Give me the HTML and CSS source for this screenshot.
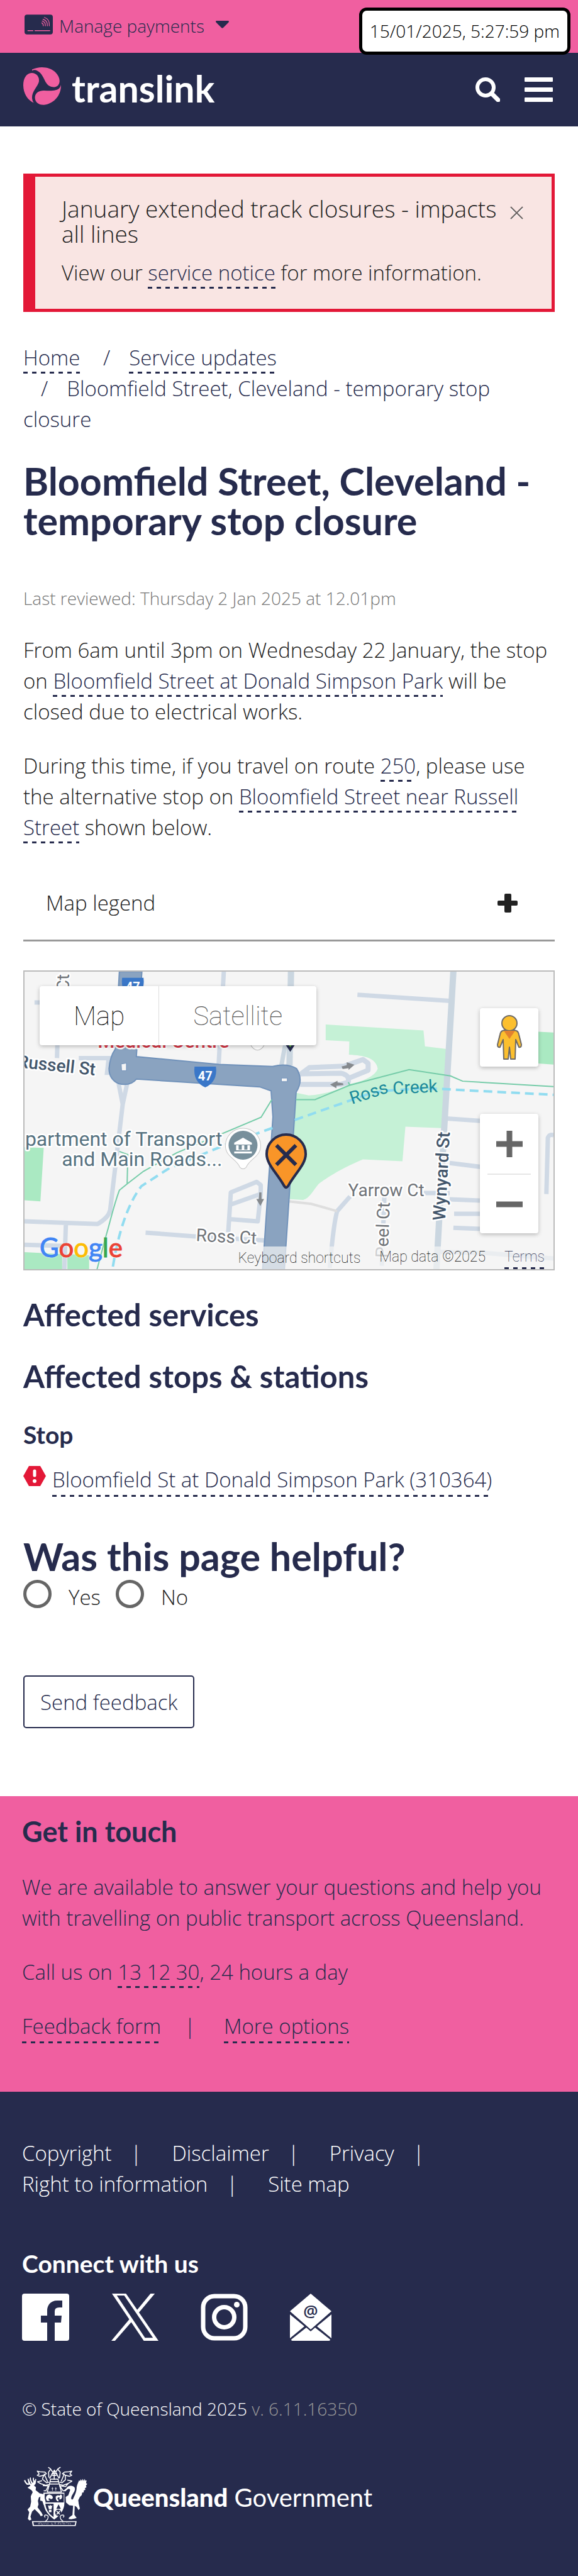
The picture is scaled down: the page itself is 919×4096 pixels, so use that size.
FILE: index.html
```html
<!DOCTYPE html>
<html lang="en">
<head>
<meta charset="utf-8">
<meta name="viewport" content="width=device-width, initial-scale=1">
<title>Bloomfield Street, Cleveland - temporary stop closure | Translink</title>
<link rel="stylesheet" href="styles.css">
</head>
<body>
<div class="topbar">
  <button class="payments" type="button">
    <svg class="payments-card" viewBox="0 0 176 124" aria-hidden="true">
      <rect width="176" height="124" rx="16" fill="#262b4d"/>
      <g fill="none" stroke="#f05fa0" stroke-width="6" stroke-linecap="round">
        <path d="M21 100H52M65 100H157"/>
        <path d="M107 52Q117 57 117 70M110 40Q131 47 130 70M115 29Q144 38 142 70M124 18Q158 29 154 70" stroke-width="5"/>
      </g>
    </svg>
    <span>Manage payments</span>
    <svg class="payments-caret" viewBox="0 0 21 12" aria-hidden="true"><path d="M1 0H20Q22 1 20 3L12 11Q10.500 12.500 9 11L1 3Q-1 1 1 0Z" fill="#262b4d"/></svg>
  </button>
  <time class="clock">15/01/2025, 5:27:59 pm</time>
</div>

<header class="header">
  <a class="brand" href="#">
    <svg class="brand-mark" viewBox="24 351 232 232" aria-hidden="true">
      <g fill="#f05fa0">
        <path d="M78 365C126 342 186 348 222 382C248 408 256 444 236 464C214 482 181 471 167 450C149 422 141 386 108 371Q92 364 78 372Z"/>
        <path d="M88 569C50 552 25 512 24 462C24 420 42 388 76 386C106 386 126 412 120 441C112 470 76 500 78 540Q79 556 88 569Z"/>
        <path d="M255 459C260 510 222 574 152 582C116 584 94 562 96 533C99 506 123 493 152 494C190 496 232 498 247 478Q253 470 255 459Z"/>
      </g>
    </svg>
    <span class="brand-name">translink</span>
  </a>
  <div class="header-tools">
    <button class="icon-button" type="button" aria-label="Search">
      <svg width="39" height="39" viewBox="0 0 39 39" fill="none" stroke="#fff" aria-hidden="true"><circle cx="16" cy="16" r="13" stroke-width="6"/><path d="M26 26L36 36" stroke-width="7" stroke-linecap="round"/></svg>
    </button>
    <button class="icon-button" type="button" aria-label="Menu">
      <svg width="45" height="39" viewBox="0 0 45 39" fill="#fff" aria-hidden="true"><rect width="45" height="7" rx="1"/><rect y="16" width="45" height="7" rx="1"/><rect y="32" width="45" height="7" rx="1"/></svg>
    </button>
  </div>
</header>

<main class="main">
  <section class="alert">
    <div class="alert-head">
      <h2 class="alert-title">January extended track closures - impacts all lines</h2>
      <button class="alert-close" type="button" aria-label="Close">
        <svg width="21" height="21" viewBox="0 0 21 21" fill="none" aria-hidden="true"><path d="M1 3L20 21M20 3L1 21" stroke="#fff" stroke-width="2"/><path d="M1 1L20 20M20 1L1 20" stroke="#6b6262" stroke-width="2"/></svg>
      </button>
    </div>
    <p class="alert-text">View our <a class="link" href="#">service notice</a> for more information.</p>
  </section>

  <nav aria-label="Breadcrumb">
    <ol class="breadcrumb">
      <li><a class="link" href="#">Home</a></li>
      <li><a class="link" href="#">Service updates</a></li>
      <li>Bloomfield Street, Cleveland - temporary stop closure</li>
    </ol>
  </nav>

  <h1 class="title">Bloomfield Street, Cleveland - temporary stop closure</h1>
  <p class="reviewed">Last reviewed: Thursday 2 Jan 2025 at 12.01pm</p>
  <p class="copy">From 6am until 3pm on Wednesday 22 January, the stop on <a class="link" href="#">Bloomfield Street at Donald Simpson Park</a> will be closed due to electrical works.</p>
  <p class="copy">During this time, if you travel on route <a class="link" href="#">250</a>, please use the alternative stop on <a class="link" href="#">Bloomfield Street near Russell Street</a> shown below.</p>

  <button class="legend" type="button" aria-expanded="false">
    <span>Map legend</span>
    <svg width="32" height="30" viewBox="0 0 32 30" aria-hidden="true"><g fill="#222"><rect x="11" width="11" height="30" rx="2"/><rect y="11" width="32" height="8" rx="2"/></g></svg>
  </button>

  <section class="map" aria-label="Map of the closed stop">
    <svg class="map-canvas" viewBox="0 0 840 473" preserveAspectRatio="xMidYMid slice" aria-hidden="true">
      <rect width="840" height="473" fill="#f5f5f5"/>
      <g class="map-roads" transform="scale(.5861 .3331) translate(-68 -77)">
        <g fill="#c5f1d6">
          <path d="M884 330L1149 358L1153 434L1212 447L1210 700L1198 824L1100 817L1092 982L985 973C920 1020 880 1070 865 1090C850 1120 840 1160 823 1166L783 1162L803 655L838 668Q900 660 950 612C990 600 1020 570 1025 540C1020 490 990 478 947 474L948 411L884 405Z"/>
        </g>
        <g fill="#aae9c2">
          <path d="M1460 364L1502 368V521L1460 516ZM68 915L120 918L111 1173L68 1168ZM68 1415L170 1424V1500H68ZM184 1424L243 1430V1500H184Z"/>
        </g>
        <g fill="none" stroke="#cfd9e5" stroke-width="7" stroke-linejoin="round">
          <path d="M608 77L594 520M970 188L1222 217M95 225H160L156 490M215 490H310M323 612L334 710L346 612M334 710L300 1215Q296 1250 266 1281L68 1268M180 1281L176 1500M68 1380L180 1386M396 1322L530 1340L722 1360M620 1320L627 1130L697 1080L708 1095V1138L627 1188M708 1138L700 1268L624 1258M1212 778L1310 790M1220 990L1310 1010M1150 1133H1220M1220 1163L1310 1170M1232 1232H1310M1230 1299L1310 1305M895 1490C900 1390 905 1280 915 1220L950 1150M1482 1138L1486 870Q1490 850 1502 858M1190 1414L1320 1420L1502 1445M1043 1150L1036 1480"/>
          <path d="M790 77L786 525M1230 77L1205 830L1184 1500" stroke-width="10" stroke="#cad6e0"/>
          <path d="M764 525L775 420M786 525V420" stroke="#cad6e0"/>
          <path d="M815 568L840 535L935 528L985 497L999 515V548L948 585M815 565L925 562Q950 570 945 605L925 615H815" stroke-width="8"/>
        </g>
        <path d="M780 1172L845 1185L915 1220" fill="none" stroke="#dedede" stroke-width="4"/>
        <path d="M290 490H305V570H285Z" fill="#cfd9e5"/>
        <path d="M325 77H386L371 483L595 520L740 530Q780 512 805 540Q825 595 804 652L772 1500H713L741 770L736 646L705 627L371 590Q355 625 323 612Q297 590 297 540Q300 480 313 450Z" fill="#8aa3c0" stroke="#7192ba" stroke-width="2"/>
        <path d="M330 518L344 514V550H331ZM764 585H780V602H764Z" fill="#f5f5f5" stroke="#7192ba" stroke-width="1"/>
        <g fill="none" stroke="#76cca9" stroke-width="2">
          <path d="M803 688H855L948 620L1110 545L1222 575L1255 600L1502 626M738 688L709 772L480 942L390 1030L346 1090L325 1120C310 1190 300 1270 290 1330L264 1500M346 1090L348 950L325 935M945 605L950 620"/>
        </g>
        <g fill="none" stroke="#91dcf0" stroke-width="4" stroke-dasharray="14 8">
          <path d="M800 785L1010 655Q1080 635 1190 636L1260 643L1502 665M740 823L610 905L460 1015L385 1100C345 1190 320 1340 306 1500"/>
        </g>
        <g fill="#85898d">
          <path d="M927 530L941 524V510L962 522L946 546V538L930 542ZM931 610L916 606V598L896 616L913 634V622L932 618ZM704 1130H710V1162H717L707 1195L696 1162H703Z"/>
        </g>
      </g>
      <g class="map-labels">
        <text transform="translate(71 4) rotate(-90)" text-anchor="end" class="map-street">Hill Ct</text>
        <text transform="translate(-12 152) rotate(6)" class="map-main">Russell St</text>
        <text x="116" y="121" class="map-place-red">Medical Centre</text>
        <text transform="translate(520 211) rotate(-18)" class="map-water">Ross</text>
        <text transform="translate(585 195) rotate(-3)" class="map-water">Creek</text>
        <text x="314" y="277" text-anchor="end" class="map-place">partment of Transport</text>
        <text x="314" y="309" text-anchor="end" class="map-place">and Main Roads...</text>
        <text x="514" y="357" class="map-street">Yarrow Ct</text>
        <text transform="translate(577 455) rotate(-88)" class="map-street">Peel Ct</text>
        <text transform="translate(668 396) rotate(-87)" class="map-main">Wynyard St</text>
        <text transform="translate(272 428) rotate(3)" class="map-street">Ross Ct</text>
      </g>
      <g>
        <path d="M155 10H189Q192 34 172 43Q152 34 155 10Z" fill="#3a77c8"/>
        <text x="172" y="31" class="map-shield">47</text>
        <path d="M270 151H304Q307 175 287 184Q267 175 270 151Z" fill="#3a77c8"/>
        <text x="287" y="173" class="map-shield">47</text>
      </g>
      <path d="M355 100Q358 124 370 125Q382 124 385 100Z" fill="#fff" stroke="#bbb"/>
      <path d="M414 112L422 124L430 112Z" fill="#63b544" stroke="#262b4d" stroke-width="4"/>
      <path d="M347 249A28 28 0 0 1 375 277C375 294 357 298 352 311Q347 316 342 311C337 298 319 294 319 277A28 28 0 0 1 347 249Z" fill="#fff" stroke="#c8c8c8"/>
      <circle cx="347" cy="276" r="23" fill="#78909c"/>
      <path d="M347 264L361 272V275H333V272ZM336 276H340V283H345V276H349V283H354V276H358V284H336ZM333 286H361V289H333Z" fill="#fff"/>
      <path d="M415.500 259A31 31 0 0 1 446.500 290C446.500 306 431 319 419 340Q415.500 346 412 340C400 319 384.500 306 384.500 290A31 31 0 0 1 415.500 259Z" fill="#f99528" stroke="#262b4d" stroke-width="4"/>
      <path d="M400 276L431 307M431 276L400 307" stroke="#262b4d" stroke-width="6"/>
    </svg>
    <div class="map-types">
      <button class="map-type map-type-active" type="button">Map</button>
      <button class="map-type" type="button">Satellite</button>
    </div>
    <button class="map-pegman" type="button" aria-label="Street View">
      <svg width="40" height="72" viewBox="0 0 40 72" aria-hidden="true">
        <g fill="#fcbf2e" stroke="#6e6a66" stroke-width="2" stroke-linejoin="round">
          <path d="M9 25Q20 21 31 25Q34 26 35 31L39 47Q39 52 35 51L30 39L29 70H22L20 51L18 70H11L10 39L5 51Q1 52 1 47L5 31Q6 26 9 25Z"/>
          <circle cx="20" cy="13" r="12"/>
        </g>
        <path d="M11 25H29L20 38Z" fill="#e2812f"/>
      </svg>
    </button>
    <div class="map-zoom">
      <button class="map-zoom-button" type="button" aria-label="Zoom in"><svg width="42" height="42" viewBox="0 0 42 42" aria-hidden="true"><path d="M16.500 0H25.500V16.500H42V25.500H25.500V42H16.500V25.500H0V16.500H16.500Z" fill="#666"/></svg></button>
      <button class="map-zoom-button" type="button" aria-label="Zoom out"><svg width="42" height="42" viewBox="0 0 42 42" aria-hidden="true"><path d="M0 16.500H42V25.500H0Z" fill="#666"/></svg></button>
    </div>
    <div class="map-logo" aria-label="Google"><span class="g-blue">G</span><span class="g-red">o</span><span class="g-yellow">o</span><span class="g-blue">g</span><span class="g-green">l</span><span class="g-red">e</span></div>
    <div class="map-credits">
      <button class="map-keys" type="button">Keyboard shortcuts</button>
      <span>Map data ©2025</span>
      <a class="link" href="#">Terms</a>
    </div>
  </section>

  <h2 class="section-title">Affected services</h2>
  <h2 class="section-title section-title-next">Affected stops &amp; stations</h2>
  <h3 class="stop-title">Stop</h3>
  <p class="stop">
    <svg class="stop-icon" viewBox="0 0 36 32" aria-hidden="true"><path d="M9 0H27L36 16L27 32H9L0 16Z" fill="#e31837"/><path d="M18 8V15" stroke="#fff" stroke-width="5" stroke-linecap="round"/><circle cx="18" cy="24" r="3" fill="#fff"/></svg>
    <a class="link" href="#">Bloomfield St at Donald Simpson Park (310364)</a>
  </p>

  <form class="feedback">
    <fieldset class="feedback-set">
      <legend class="feedback-title">Was this page helpful?</legend>
      <div class="feedback-options">
        <label class="option"><input class="radio" type="radio" name="helpful" value="yes"><span>Yes</span></label>
        <label class="option"><input class="radio" type="radio" name="helpful" value="no"><span>No</span></label>
      </div>
    </fieldset>
    <button class="send" type="button">Send feedback</button>
  </form>
</main>

<section class="touch">
  <h2 class="touch-title">Get in touch</h2>
  <p class="touch-copy">We are available to answer your questions and help you with travelling on public transport across Queensland.</p>
  <p class="touch-copy">Call us on <a class="link" href="#">13 12 30</a>, 24 hours a day</p>
  <p class="touch-copy touch-links"><a class="link" href="#">Feedback form</a><span>|</span><a class="link" href="#">More options</a></p>
</section>

<footer class="footer">
  <ul class="footer-links">
    <li><a href="#">Copyright</a></li>
    <li><a href="#">Disclaimer</a></li>
    <li><a href="#">Privacy</a></li>
    <li><a href="#">Right to information</a></li>
    <li><a href="#">Site map</a></li>
  </ul>
  <h2 class="connect-title">Connect with us</h2>
  <div class="social">
    <a href="#" aria-label="Facebook"><svg width="75" height="75" viewBox="0 0 75 75"><path d="M4 0H71Q75 0 75 4V71Q75 75 71 75H52V46H62L63 35H52V28Q52 22 59 22H64V11H56C45 11 40 19 40 27V35H30V46H40V75H4Q0 75 0 71V4Q0 0 4 0Z" fill="#fff"/></svg></a>
    <a href="#" aria-label="X"><svg width="75" height="75" viewBox="0 0 77 77"><g fill="#fff"><path fill-rule="evenodd" d="M1 0H24L77 77H53ZM9 3L55 72H68L21 3Z"/><path d="M41 28L64 0H71L44 32ZM31 40L34 45L6 77H0Z"/></g></svg></a>
    <a href="#" aria-label="Instagram"><svg width="75" height="75" viewBox="0 0 75 75"><g fill="none" stroke="#fff" stroke-width="7"><rect x="4" y="4" width="67" height="67" rx="18"/><circle cx="37.500" cy="37.500" r="16"/></g><circle cx="57.500" cy="17.500" r="4.500" fill="#fff"/></svg></a>
    <a href="#" aria-label="Email"><svg width="66" height="75" viewBox="0 0 66 75"><path d="M33 0L66 28L33 57L0 28ZM0 33L23 52L0 71ZM66 33L43 52L66 71ZM26 54L33 60L40 54L64 73Q64 75 62 75H4Q2 75 2 73Z" fill="#fff"/><text x="33" y="37" class="at-sign">@</text></svg></a>
  </div>
  <p class="rights">© State of Queensland 2025 <span class="version">v. 6.11.16350</span></p>
  <a class="government" href="#">
    <svg class="crest" viewBox="24 22 396 370" aria-hidden="true">
      <g fill="#fff">
        <path d="M48 152L66 140L62 134L44 135Q28 120 26 107L34 106Q42 128 54 127L48 98L54 97L66 126L73 132L62 104V92L68 88L70 106L80 124L84 116Q78 106 81 92L87 90Q86 104 93 112L96 98L102 100L98 128L88 140L100 150L98 168Q112 178 122 188L146 192L150 208L130 206L118 214L112 234L116 256L110 274L134 306L143 324L130 330L120 314L92 286L76 300L66 332L72 350L60 356L50 346L58 304L48 288L64 270L70 240L68 206L80 180L72 168Z"/>
        <path d="M128 192L148 196L160 240L148 262L140 236L126 232Z"/>
        <path d="M288 156C298 140 324 134 340 152C348 176 318 194 318 220Q322 232 330 222C340 200 352 180 352 150C356 132 362 120 367 108L373 112L378 100L384 112L390 98L396 112L402 98L406 110L414 108L410 124L418 130L409 140L413 150L403 156L406 166L396 170L396 182L386 184L384 198L372 210L362 230L365 254L372 282L364 292L352 272L340 264L338 320L352 340L338 344L318 348L302 346L304 338L326 322L330 264L306 262L286 244L284 210L300 200L308 178Q318 158 300 160Q290 166 282 176L272 170Z"/>
        <path fill-rule="evenodd" d="M146 184H276V248Q276 305 213 350Q150 305 148 248ZM154 190H272V244H154ZM158 252H209V336Q162 304 158 252Z"/>
        <path d="M162 220Q160 198 184 194Q208 202 204 218Q192 230 186 218L176 222L186 234H168ZM222 208Q232 196 246 202L254 194Q266 200 260 218Q252 230 242 222L250 216L238 212L232 222Q244 230 238 238Q222 236 222 208ZM174 262L184 266L188 258L194 266L202 262L196 286H180ZM180 290H196V304H180Z"/>
        <path d="M75 360H352L346 390H80Z"/>
      </g>
      <path d="M84 366H344L340 384H87Z" fill="#262b4d"/>
      <path d="M116 370V380M122 380V371H130M136 370V380H142M150 370V380M158 371L168 380M174 370V380M198 370V380H206M214 371H224M219 371V380M238 370V380M238 371H248M254 370V380M262 371H270V380M278 370V380M286 371H296M302 370V380M310 371L316 380" stroke="#fff" stroke-width="2" fill="none"/>
      <g fill="#262b4d"><path d="M213 250H270Q266 292 217 336L214 320Z" fill="#fff"/><circle cx="238" cy="308" r="19" fill="#262b4d"/><path d="M240 256L254 284H226Z"/></g>
      <path d="M228 298L248 318M248 298L228 318" stroke="#fff" stroke-width="6"/>
      <g fill="none" stroke="#fff" stroke-width="6" stroke-linejoin="round">
        <path d="M206 60L190 36L176 26M220 60L236 36L252 26M190 40L178 56L180 90M236 40L250 56L246 92M184 96L214 44L244 96M196 66H232M200 76H228M213 50V104M190 100H236L244 130L258 180H170L184 130ZM188 116H238M186 130H240"/>
        <path d="M108 50L124 54L156 56L164 66L148 76L122 82L108 76L120 68ZM148 76L140 100L166 122L180 118M150 66L172 116M108 116L130 128L160 138L184 132M108 116L138 110M142 140L176 142L162 172H148"/>
        <path d="M322 50L304 54L276 56L264 66L282 76L308 82L322 76L310 68ZM282 76V104L262 122L246 118M276 66L256 114M324 112L300 126L268 138L244 132M324 112L294 106M300 126L284 146L248 142L268 172H278"/>
        <path d="M156 322Q184 320 172 348L158 362M156 322Q148 330 158 336M270 322Q242 320 254 348L268 362M270 322Q278 330 268 336" stroke-width="5"/>
        <path d="M202 150V172M196 158H208M223 150V172M217 158H229" stroke-width="3"/>
      </g>
    </svg>
    <span class="government-name"><strong>Queensland</strong> Government</span>
  </a>
</footer>
</body>
</html>
```
FILE: styles.css
```css
* {
  box-sizing: border-box;
}

:root {
  --navy: #262b4d;
  --pink: #f05fa0;
  --red: #e31837;
  --ink: #222;
}

body {
  margin: 0;
  background: #fff;
  color: var(--ink);
  font: 300 33px/49px "Open Sans", "Noto Sans", sans-serif;
}

h1, h2, h3, p, ul, ol, fieldset {
  margin: 0;
  padding: 0;
  border: 0;
}

svg {
  display: block;
  flex: none;
}

button {
  margin: 0;
  padding: 0;
  border: 0;
  background: none;
  color: inherit;
  font: inherit;
}

a {
  color: inherit;
  text-decoration: none;
}

.link {
  padding-bottom: 3px;
  color: var(--navy);
  background: repeating-linear-gradient(90deg, var(--navy) 0 7px, transparent 7px 14px) left bottom / 100% 3px no-repeat;
  -webkit-box-decoration-break: clone;
  box-decoration-break: clone;
}

/* Top bars */

.topbar {
  display: flex;
  justify-content: space-between;
  height: 84px;
  padding: 12px 12px 0 39px;
  background: var(--pink);
}

.payments {
  display: flex;
  align-items: center;
  gap: 10px;
  height: 58px;
  color: var(--navy);
  font-size: 28px;
}

.payments-card {
  width: 45px;
  height: 32px;
  margin-bottom: 5px;
}

.payments-caret {
  width: 21px;
  height: 12px;
  margin-left: 8px;
  margin-bottom: 5px;
}

.clock {
  position: relative;
  z-index: 1;
  height: 75px;
  padding: 0 12px;
  border: 5px solid #000;
  border-radius: 12px;
  background: #fff;
  color: #000;
  font-size: 28px;
  line-height: 65px;
}

.header {
  display: flex;
  align-items: center;
  justify-content: space-between;
  height: 117px;
  padding: 0 40px 0 37px;
  background: var(--navy);
}

.brand {
  display: flex;
  align-items: center;
  gap: 17px;
  color: #fff;
}

.brand-mark {
  width: 60px;
  height: 60px;
  margin-bottom: 12px;
}

.brand-name {
  padding-bottom: 4px;
  font: 700 59px/72px Lato, sans-serif;
}

.header-tools {
  display: flex;
  gap: 39px;
}

/* Content */

.main {
  padding: 75px 37px 108px;
}

.alert {
  padding: 31px 45px 33px 42px;
  border: 5px solid var(--red);
  border-left-width: 19px;
  background: #f9e5e3;
}

.alert-head {
  display: flex;
  justify-content: space-between;
  align-items: flex-start;
}

.alert-title {
  flex: 1;
  font-size: 37px;
  font-weight: 300;
  line-height: 40px;
}

.alert-close {
  padding-top: 16px;
}

.alert-text {
  margin-top: 17px;
}

.breadcrumb {
  margin-top: 48px;
  color: var(--navy);
  list-style: none;
}

.breadcrumb li {
  display: inline;
}

.breadcrumb li + li {
  display: inline-block;
}

.breadcrumb li + li::before {
  content: "/";
  padding: 0 30px 0 28px;
}

.title,
.feedback-title {
  color: var(--navy);
  font: 700 61px/63px Lato, sans-serif;
}

.title {
  margin-top: 42px;
}

.reviewed {
  margin-top: 71px;
  color: #777;
  font-size: 28px;
  line-height: 42px;
}

.copy {
  margin-top: 37px;
}

.legend {
  display: flex;
  align-items: center;
  justify-content: space-between;
  width: 100%;
  margin-top: 35px;
  padding: 36px 59px 34px 36px;
  border-bottom: 3px solid #999;
  text-align: left;
}

/* Map */

.map {
  position: relative;
  height: 477px;
  margin-top: 46px;
  border: 2px solid #bbb;
  overflow: hidden;
  font: 100 23px/33px Roboto, sans-serif;
}

.map-canvas {
  position: absolute;
  inset: 0;
  width: 100%;
  height: 100%;
}

.map-roads path {
  vector-effect: non-scaling-stroke;
}

.map-labels text {
  font: 400 28px Roboto, sans-serif;
  stroke: #fff;
  stroke-width: 5px;
  stroke-linejoin: round;
  paint-order: stroke;
}

.map-labels .map-street {
  fill: #6f7378;
}

.map-labels .map-main {
  fill: #43566b;
  font-weight: 500;
}

.map-labels .map-place {
  fill: #567280;
  font-size: 32px;
}

.map-labels .map-place-red {
  fill: #d93848;
  font-size: 31px;
  font-weight: 500;
}

.map-labels .map-water {
  fill: #1b8a9b;
  stroke: none;
}

.map-shield {
  fill: #fff;
  font: 700 20px Roboto, sans-serif;
  text-anchor: middle;
}

.map-types {
  position: absolute;
  top: 23px;
  left: 24px;
  display: flex;
  border-radius: 4px;
  background: #fff;
  box-shadow: 0 2px 6px rgba(0, 0, 0, .25);
}

.map-type {
  height: 94px;
  padding: 0 54px;
  color: #555;
  font-size: 42px;
}

.map-type-active {
  border-right: 1px solid #ddd;
  color: #000;
}

.map-pegman,
.map-zoom {
  position: absolute;
  right: 24px;
  width: 93px;
  border-radius: 4px;
  background: #fff;
  box-shadow: 0 2px 6px rgba(0, 0, 0, .25);
}

.map-pegman {
  top: 58px;
  display: grid;
  place-items: center;
  height: 93px;
}

.map-zoom {
  top: 226px;
  padding: 0 12px;
}

.map-zoom-button {
  display: grid;
  place-items: center;
  width: 100%;
  height: 95px;
}

.map-zoom-button + .map-zoom-button {
  border-top: 2px solid #e6e6e6;
}

.map-logo {
  position: absolute;
  left: 24px;
  bottom: 8px;
  font: 400 42px/54px Lato, sans-serif;
  -webkit-text-stroke: 1px currentColor;
  text-shadow: 0 0 3px #fff;
}

.g-blue { color: #4285f4; }
.g-red { color: #ea4335; }
.g-yellow { color: #fbbc05; }
.g-green { color: #34a853; }

.map-credits {
  position: absolute;
  right: 0;
  bottom: 0;
  display: flex;
  gap: 30px;
  padding: 0 14px 0 12px;
  background: rgba(245, 245, 245, .7);
  color: #000;
}

/* Affected stops and feedback */

.section-title,
.stop-title {
  color: var(--navy);
  font: 700 49px/49px Lato, sans-serif;
}

.section-title {
  margin-top: 46px;
}

.section-title-next {
  margin-top: 49px;
}

.stop-title {
  margin-top: 44px;
  font-size: 39px;
}

.stop {
  display: flex;
  gap: 10px;
  margin-top: 22px;
}

.stop-icon {
  width: 36px;
  height: 32px;
  margin-top: 3px;
}

.feedback {
  margin-top: 63px;
}

.feedback-title {
  padding: 0;
}

.feedback-options {
  display: flex;
  gap: 24px;
  margin-top: 6px;
}

.option {
  display: flex;
  align-items: flex-end;
  gap: 27px;
  height: 52px;
}

.radio {
  align-self: flex-start;
  width: 45px;
  height: 45px;
  margin: 0;
  border: 5px solid #666;
  border-radius: 50%;
  appearance: none;
}

.send {
  height: 84px;
  margin-top: 100px;
  padding: 0 25px;
  border: 2px solid var(--navy);
  border-radius: 5px;
  color: var(--navy);
}

/* Contact */

.touch {
  padding: 32px 35px 77px;
  background: var(--pink);
  color: var(--navy);
}

.touch-title {
  margin-bottom: 39px;
  font: 700 45px/49px Lato, sans-serif;
}

.touch-copy + .touch-copy {
  margin-top: 37px;
}

.touch-links {
  display: flex;
}

.touch-links span {
  padding: 0 45px 0 37px;
}

/* Footer */

.footer {
  padding: 73px 35px 80px;
  background: var(--navy);
  color: #fff;
}

.footer-links {
  display: flex;
  flex-wrap: wrap;
  max-width: 700px;
  list-style: none;
}

.footer-links li:not(:last-child)::after {
  content: "|";
  padding: 0 48px 0 30px;
}

.connect-title {
  margin-top: 78px;
  font: 700 39px/49px Lato, sans-serif;
}

.social {
  display: flex;
  gap: 67px;
  height: 75px;
  margin-top: 23px;
}

.at-sign {
  fill: var(--navy);
  font: 600 26px "Open Sans", sans-serif;
  text-anchor: middle;
}

.rights {
  margin-top: 87px;
  font-size: 28px;
  line-height: 42px;
}

.version {
  color: #999;
}

.government {
  display: flex;
  align-items: center;
  gap: 8px;
  margin-top: 71px;
  padding-left: 2px;
}

.crest {
  width: 103px;
  height: 95px;
}

.government-name {
  padding-top: 4px;
  font: 400 40px/49px Lato, sans-serif;
}

.government-name strong {
  font-weight: 900;
}
```
